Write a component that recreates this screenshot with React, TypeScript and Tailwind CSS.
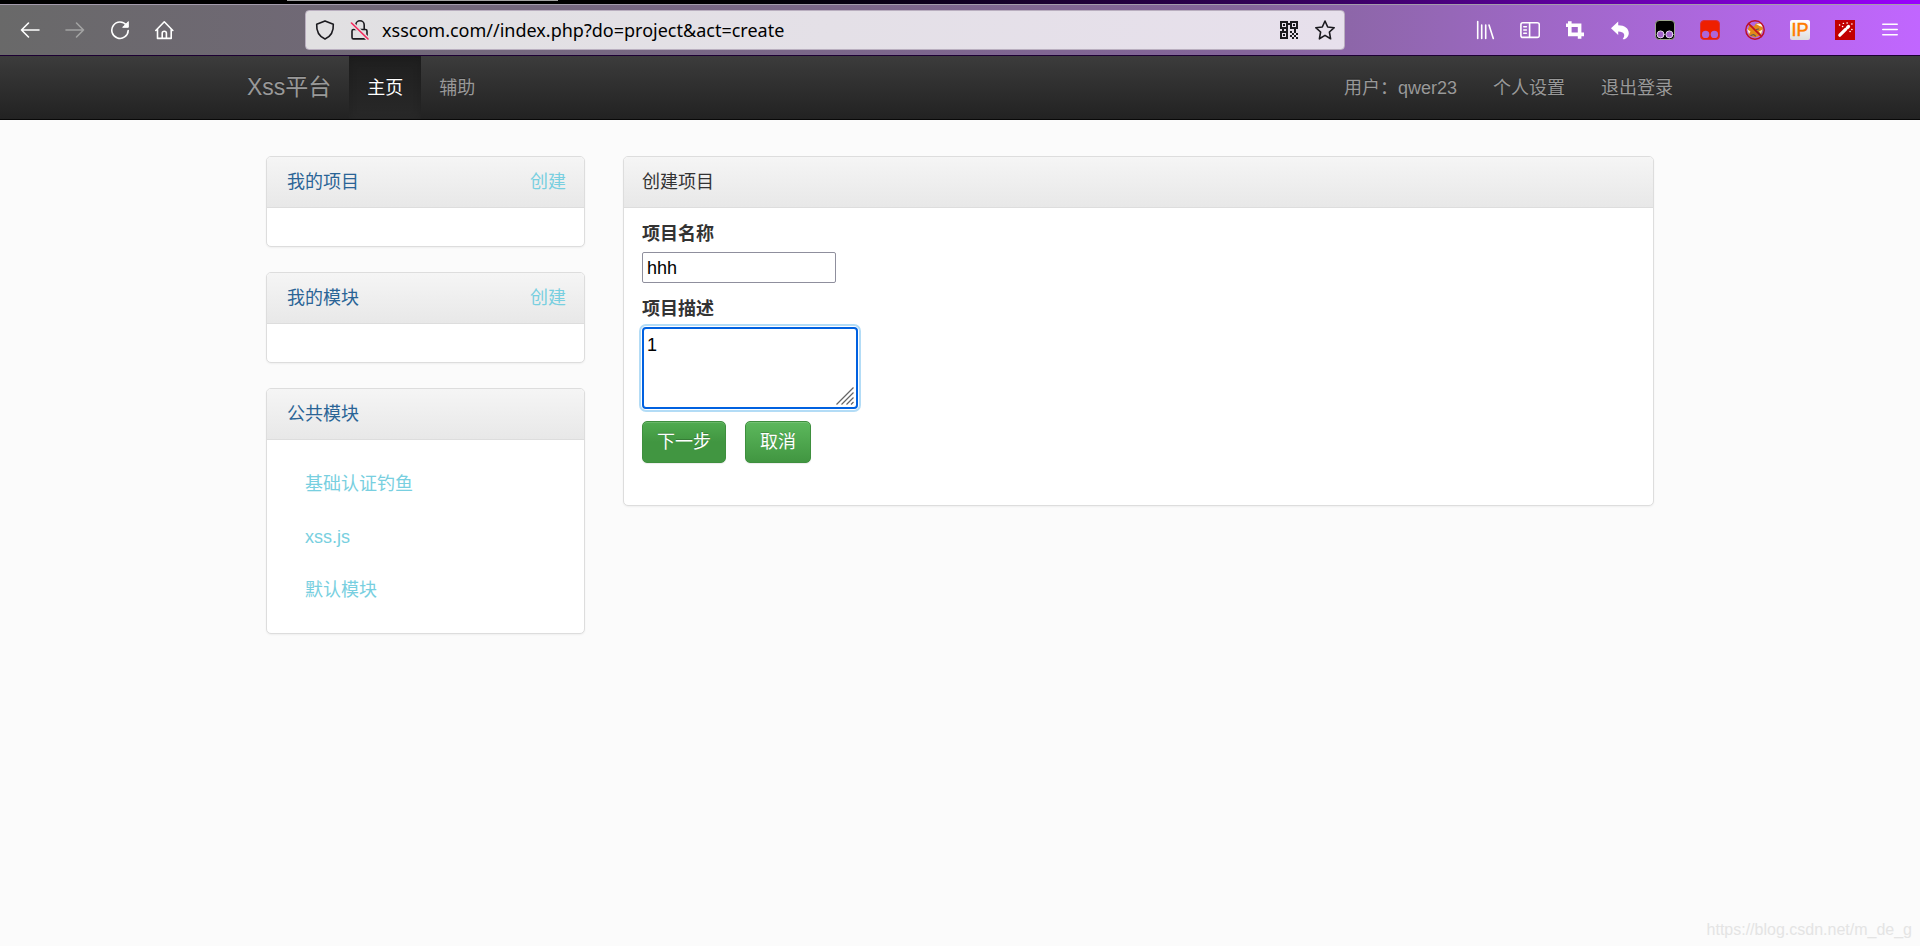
import { useState } from 'react'
import type { ReactNode } from 'react'

const navLinks = [
  { label: '用户：qwer23', href: '#user' },
  { label: '个人设置', href: '#settings' },
  { label: '退出登录', href: '#logout' },
]

const publicModules = ['基础认证钓鱼', 'xss.js', '默认模块']

const Icon = ({ children }: { children: ReactNode }) => (
  <svg
    viewBox="0 0 20 20"
    className="w-5 h-5 shrink-0"
    fill="none"
    stroke="currentColor"
    strokeWidth="1.6"
    strokeLinecap="round"
    strokeLinejoin="round"
    aria-hidden="true"
  >
    {children}
  </svg>
)

const ToolButton = ({ label, children }: { label: string; children: ReactNode }) => (
  <button type="button" aria-label={label} className="w-5 h-5 shrink-0">
    <Icon>{children}</Icon>
  </button>
)

const BrowserBar = () => {
  const [url, setUrl] = useState('xsscom.com//index.php?do=project&act=create')

  return (
    <div>
      {/* Tab strip edge */}
      <div className="h-1 bg-linear-to-r from-black from-30% via-[#3b0066] via-70% to-[#9a00ff] flex">
        <div className="ml-[287px] w-[271px] h-px bg-[#a3a3a3]"></div>
      </div>

      <div className="h-[52px] flex items-center pl-5 pr-5 text-white border-t border-t-[#a39bab] border-b border-b-[#1d0033] bg-linear-to-r from-[#696969] via-[#84659a] via-65% to-[#c166ff]">
        <div className="flex items-center gap-[25px]">
          <ToolButton label="Back">
            <path d="M1.5 10H19M8.5 3L1.5 10L8.5 17" />
          </ToolButton>
          <ToolButton label="Forward">
            <path d="M1 10H18.5M11.5 3L18.5 10L11.5 17" stroke="#a3a3a3" />
          </ToolButton>
          <ToolButton label="Reload">
            <path d="M16.5 5.2A8.2 8.2 0 1 0 18.2 10.5" />
            <path d="M18.3 2V7.3H13Z" fill="currentColor" strokeWidth="1" />
          </ToolButton>
          <ToolButton label="Home">
            <path d="M0.8 10.5L9.3 1.8L17.8 10.5M2.5 9V18.4H16.2V9M7.2 18.2V13.2Q7.2 11.2 9.3 11.2Q11.4 11.2 11.4 13.2V18.2" />
          </ToolButton>
        </div>

        <div className="ml-[130px] w-[1040px] h-10 flex items-center rounded-sm border border-[#b9aebf] bg-linear-to-r from-[#e1e0e2] to-[#e7e0ec] px-[9px] text-[#1b1a1f]">
          <ToolButton label="Tracking protection">
            <path d="M10 0.9L18.3 4.3C18.7 11 15.8 16.5 10 19.1C4.2 16.5 1.3 11 1.7 4.3Z" />
          </ToolButton>
          <div className="ml-[15px] flex">
            <ToolButton label="Connection is not secure">
              <path d="M5.8 9.5V5A4.2 4.2 0 0 1 14.2 5V9.5M3.5 9.5H15.5Q17 9.5 17 11V17.2Q17 18.9 15.5 18.9H3.5Q2 18.9 2 17.2V11Q2 9.5 3.5 9.5Z" />
              <path d="M1.5 3L18 19" stroke="#e1e0e2" strokeWidth="4" />
              <path d="M1.5 3L18 19" stroke="#f5285c" strokeWidth="1.6" />
            </ToolButton>
          </div>
          <input
            type="text"
            aria-label="Address"
            value={url}
            onChange={e => setUrl(e.target.value)}
            className="ml-[12px] flex-1 min-w-0 bg-transparent outline-none text-lg text-black font-['Noto_Sans','Open_Sans',sans-serif]"
          />
          <div className="flex gap-4">
            <ToolButton label="QR code">
              <g fill="currentColor" stroke="none" shapeRendering="crispEdges">
                <path d="M1 1H9V9H1ZM3 3V7H7V3Z" fillRule="evenodd" />
                <path d="M11 1H19V9H11ZM13 3V7H17V3Z" fillRule="evenodd" />
                <path d="M1 11H9V19H1ZM3 13V17H7V13Z" fillRule="evenodd" />
                <path d="M4 4H6V6H4ZM14 4H16V6H14ZM4 14H6V16H4Z" />
                <path d="M9 3H11V5H9ZM3 9H5V11H3ZM7 9H9V11H7ZM15 9H17V11H15Z" />
                <path d="M11 11H13V13H11ZM15 11H17V13H15ZM13 13H15V15H13ZM17 13H19V15H17ZM11 15H13V17H11ZM15 15H17V17H15ZM13 17H15V19H13ZM17 17H19V19H17Z" />
              </g>
            </ToolButton>
            <ToolButton label="Bookmark">
              <path d="M10 1L12.7 7L19.2 7.7L14.4 12L15.6 18.8L10 15.4L4.4 18.8L5.6 12L0.8 7.7L7.3 7Z" />
            </ToolButton>
          </div>
        </div>

        {/* Extensions */}
        <div className="ml-auto flex items-center gap-[25px]">
          <ToolButton label="Library">
            <path d="M2.7 1.5V18.5M6.7 5V18.5M10.7 5V18.5M14 5L18.3 18.5" />
          </ToolButton>
          <ToolButton label="Sidebar">
            <rect x="0.9" y="2.8" width="18.4" height="14.6" rx="2" />
            <path d="M9.6 3V17M3.8 6.8H6.4M3.8 10H6.4M3.8 13.2H6.4" />
          </ToolButton>
          <ToolButton label="Screenshot">
            <path
              d="M4.8 1.2V14.4H19M1 5.2H14.6V18.8"
              strokeWidth="3.6"
              strokeLinecap="butt"
              strokeLinejoin="miter"
            />
          </ToolButton>
          <ToolButton label="Undo">
            <path
              d="M8.2 1.5V5.2C14.7 5.2 18.8 8.2 18.8 13.2C18.8 15.8 17.2 18 14.5 19.2C13.6 19.5 12.2 19.2 13 18.4C15.6 15.4 14.2 11.6 8.2 11.6V15L1 8.3Z"
              fill="currentColor"
              stroke="none"
            />
          </ToolButton>
          <ToolButton label="Tampermonkey">
            <rect x="0.5" y="0.5" width="19" height="19" rx="3.5" fill="#000" stroke="#9aa58c" strokeWidth="1" />
            <circle cx="5.6" cy="14.4" r="3.5" fill="#a463cc" stroke="#e5d6ee" strokeWidth="1" />
            <circle cx="14.4" cy="14.4" r="3.5" fill="#a463cc" stroke="#e5d6ee" strokeWidth="1" />
          </ToolButton>
          <ToolButton label="Tampermonkey beta">
            <rect x="0.5" y="0.5" width="19" height="19" rx="3.5" fill="#ee1f00" stroke="#d8323a" strokeWidth="1" />
            <circle cx="5.6" cy="14.4" r="3.7" fill="#ad66d8" stroke="none" />
            <circle cx="14.4" cy="14.4" r="3.7" fill="#ad66d8" stroke="none" />
          </ToolButton>
          <ToolButton label="Proxy">
            <path d="M3 9L5 4.5L9 6.5L11 3.5L16.5 3L18 9L16 15L10 17.5L4 15.5Z" fill="#e38a18" stroke="none" />
            <path d="M11 4L16.5 3.5L17.5 7L14.5 6ZM2 9L5.5 11.5L4 14ZM14 11.5L17.5 9.5L16 14Z" fill="#fff4df" stroke="none" />
            <path d="M6 15.5L8.5 14.5L10.5 16M11.5 9.5L13.5 9" stroke="#5f5a55" strokeWidth="1.2" />
            <circle cx="10" cy="10" r="9.2" stroke="#bd1026" strokeWidth="1.4" />
            <path d="M3.6 3.6L16.4 16.4" stroke="#bd1026" strokeWidth="1.6" />
          </ToolButton>
          <button
            type="button"
            className="w-5 h-5 shrink-0 rounded-xs bg-linear-to-b from-white to-[#dedede] text-[#ff7a00] text-lg leading-5 text-center [-webkit-text-stroke:0.5px_#ff7a00] font-['Liberation_Sans',Arial,sans-serif]"
          >
            IP
          </button>
          <ToolButton label="Magic wand">
            <rect width="20" height="20" fill="#c20000" stroke="none" />
            <path d="M4.8 15.2L10.6 9.4" strokeWidth="3.2" />
            <path d="M12.4 7.6L13.5 6.5" strokeWidth="3.2" />
            <path d="M4.5 5H4.7M8.3 3.4H8.5M7.5 6.5H7.7M16.8 9.5H17M16.8 4H17M12 3H12.2M15 11.5H15.2" strokeWidth="1.4" />
          </ToolButton>
          <ToolButton label="Menu">
            <path d="M2.8 4.2H17.2M2.8 9.5H17.2M2.8 14.8H17.2" />
          </ToolButton>
        </div>
      </div>
    </div>
  )
}

const Navbar = () => (
  <nav className="h-16 bg-linear-to-b from-[#3c3c3c] to-[#222222] border-b border-[#080808] text-[#999999] text-lg leading-[25px] [text-shadow:0_-1px_0_rgba(0,0,0,0.25)]">
    <div className="max-w-[1462px] h-full mx-auto flex justify-between">
      <div className="flex">
        <a href="#home" className="flex items-center px-[18px] text-[23px]">Xss平台</a>
        <a
          href="#index"
          className="flex items-center px-[18px] pt-0.5 text-white bg-linear-to-b from-[#1f1f1f] to-[#282828] shadow-[inset_0_3px_9px_rgba(0,0,0,0.15)]"
        >
          主页
        </a>
        <a href="#help" className="flex items-center px-[18px] pt-0.5">辅助</a>
      </div>
      <div className="flex">
        {navLinks.map(link => (
          <a key={link.label} href={link.href} className="flex items-center px-[18px] pt-0.5">
            {link.label}
          </a>
        ))}
      </div>
    </div>
  </nav>
)

const Panel = ({ header, children }: { header: ReactNode; children?: ReactNode }) => (
  <section className="rounded-[5px] border border-[#dddddd] bg-white shadow-[0_1px_2px_rgba(0,0,0,0.05)] overflow-hidden">
    <div className="h-[51px] flex items-center justify-between px-[18px] pt-px border-b border-[#dddddd] bg-linear-to-b from-[#f5f5f5] to-[#e8e8e8]">
      {header}
    </div>
    {children}
  </section>
)

const SidePanel = ({ title, canCreate, children }: { title: string; canCreate?: boolean; children?: ReactNode }) => (
  <Panel
    header={
      <>
        <h2 className="pl-[2px] text-[#2a6496]">{title}</h2>
        {canCreate && <a href="#create" className="text-[#78cfe0]">创建</a>}
      </>
    }
  >
    {children || <div className="h-[38px]"></div>}
  </Panel>
)

const CreateProject = () => {
  const [name, setName] = useState('hhh')
  const [description, setDescription] = useState('1')

  const buttonClass =
    'h-[42px] px-[14px] rounded-[5px] border border-[#3e8f3e] text-white [text-shadow:0_-1px_0_rgba(0,0,0,0.2)] shadow-[inset_0_1px_0_rgba(255,255,255,0.15),0_1px_1px_rgba(0,0,0,0.075)]'

  return (
    <Panel header={<h1>创建项目</h1>}>
      <form className="px-[18px] pt-[14px] pb-[42px]" onSubmit={e => e.preventDefault()}>
        <label htmlFor="project-name" className="block mb-[5px] font-bold">项目名称</label>
        <input
          id="project-name"
          type="text"
          value={name}
          onChange={e => setName(e.target.value)}
          className="block w-[194px] h-[31px] px-1 pt-px rounded-xs border border-[#8f8f9d] bg-white text-black outline-none"
        />
        <label htmlFor="project-description" className="block mt-[14px] mb-[5px] font-bold">项目描述</label>
        <div className="relative w-[216px]">
          <textarea
            id="project-description"
            value={description}
            onChange={e => setDescription(e.target.value)}
            className="block w-full h-[82px] px-[3px] py-1 rounded-sm border-2 border-[#0061e0] bg-white text-black outline-none resize-none shadow-[0_0_0_1px_#ffffff,0_0_0_3px_#b3dcf6]"
          />
          <svg
            viewBox="0 0 18 18"
            className="absolute right-1 bottom-1 w-[18px] h-[18px] pointer-events-none"
            stroke="#666666"
            strokeWidth="1.2"
            aria-hidden="true"
          >
            <path d="M0.5 17.5L17.5 0.5M5.5 17.5L17.5 5.5M10.5 17.5L17.5 10.5M15 17.5L17.5 15" />
          </svg>
        </div>
        <div className="mt-3 flex gap-[19px]">
          <button type="submit" className={`${buttonClass} bg-linear-to-b from-[#50ab50] to-[#419641] to-50%`}>
            下一步
          </button>
          <button type="button" className={`${buttonClass} bg-linear-to-b from-[#5cb85c] to-[#419641]`}>
            取消
          </button>
        </div>
      </form>
    </Panel>
  )
}

const App = () => {
  return (
    <div className="min-h-screen flex flex-col bg-[#fbfbfb] text-[#333333] text-lg leading-[25px] font-['Liberation_Sans','Noto_Sans_CJK_SC',sans-serif]">
      <BrowserBar />
      <Navbar />

      <main className="w-full max-w-[1462px] mx-auto px-[37px] pt-9 flex items-start gap-[38px]">
        <aside className="w-[319px] shrink-0 flex flex-col gap-[25px]">
          <SidePanel title="我的项目" canCreate />
          <SidePanel title="我的模块" canCreate />
          <SidePanel title="公共模块">
            <ul className="px-[38px] pt-8 pb-[30px] flex flex-col gap-7">
              {publicModules.map(name => (
                <li key={name}>
                  <a href="#module" className="text-[#78cfe0]">{name}</a>
                </li>
              ))}
            </ul>
          </SidePanel>
        </aside>
        <div className="flex-1 min-w-0">
          <CreateProject />
        </div>
      </main>

      <footer className="mt-auto px-2 pb-1 text-right text-base text-[#e4e4e4]">https://blog.csdn.net/m_de_g</footer>
    </div>
  )
}

export default App
